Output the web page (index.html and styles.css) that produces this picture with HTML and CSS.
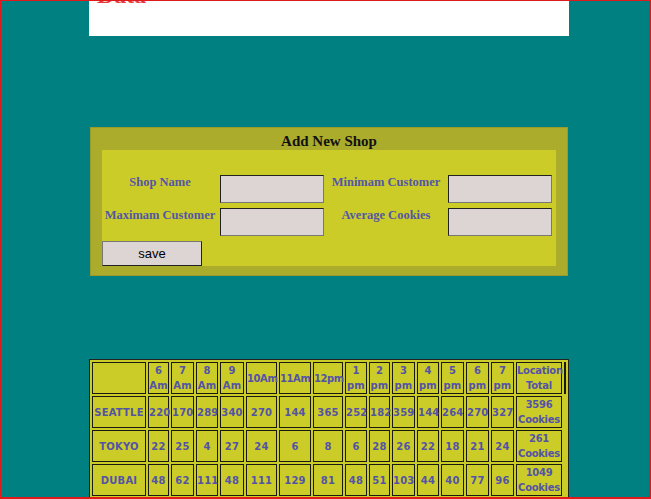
FILE: index.html
```html
<!DOCTYPE html>
<html>
<head>
<meta charset="utf-8">
<link rel="stylesheet" href="styles.css">
</head>
<body>
<div class="frame"></div>
<div class="page">
  <header class="banner">
    <h1 class="banner-title">Data</h1>
  </header>

  <form class="shop-form">
    <h2 class="form-title">Add New Shop</h2>
    <div class="form-body">
      <div class="grid">
        <label class="lbl">Shop Name</label>
        <input class="field" type="text">
        <label class="lbl">Minimam Customer</label>
        <input class="field" type="text">
        <label class="lbl">Maximam Customer</label>
        <input class="field" type="text">
        <label class="lbl">Average Cookies</label>
        <input class="field" type="text">
      </div>
      <button class="save" type="button">save</button>
    </div>
  </form>

  <table class="sales">
    <colgroup>
      <col class="c-name"><col class="c21"><col class="c23"><col class="c22"><col class="c24">
      <col class="c31"><col class="c32"><col class="c30"><col class="c22"><col class="c21">
      <col class="c23"><col class="c22"><col class="c23"><col class="c23"><col class="c23">
      <col class="c-total"><col class="c-extra">
    </colgroup>
    <tr>
      <th></th><th>6 Am</th><th>7 Am</th><th>8 Am</th><th>9 Am</th><th class="tight">10Am</th><th class="tight">11Am</th><th class="tight">12pm</th>
      <th>1 pm</th><th>2 pm</th><th>3 pm</th><th>4 pm</th><th>5 pm</th><th>6 pm</th><th>7 pm</th>
      <th class="total">Location Total</th><th class="extra"></th>
    </tr>
    <tr>
      <td>SEATTLE</td><td>220</td><td>170</td><td>289</td><td>340</td><td>270</td><td>144</td><td>365</td>
      <td>252</td><td>182</td><td>359</td><td>144</td><td>264</td><td>270</td><td>327</td><td class="total">3596 Cookies</td>
    </tr>
    <tr>
      <td>TOKYO</td><td>22</td><td>25</td><td>4</td><td>27</td><td>24</td><td>6</td><td>8</td>
      <td>6</td><td>28</td><td>26</td><td>22</td><td>18</td><td>21</td><td>24</td><td class="total">261 Cookies</td>
    </tr>
    <tr>
      <td>DUBAI</td><td>48</td><td>62</td><td>111</td><td>48</td><td>111</td><td>129</td><td>81</td>
      <td>48</td><td>51</td><td>103</td><td>44</td><td>40</td><td>77</td><td>96</td><td class="total">1049 Cookies</td>
    </tr>
    <tr>
      <td>PARIS</td><td>35</td><td>48</td><td>20</td><td>54</td><td>29</td><td>37</td><td>60</td>
      <td>41</td><td>33</td><td>58</td><td>26</td><td>47</td><td>39</td><td>52</td><td class="total">579 Cookies</td>
    </tr>
  </table>
</div>
</body>
</html>
```

FILE: styles.css
```css
html {
  overflow: hidden;
}
body {
  margin: 0;
  background: #008080;
  font-family: "Liberation Serif", serif;
}
.frame {
  position: fixed;
  inset: 0;
  border-style: solid;
  border-color: #e01a1a;
  border-width: 1px 2px 2px 1px;
  pointer-events: none;
  z-index: 10;
}
.page {
  width: 480px;
  margin-left: 89px;
}
.banner {
  background: #ffffff;
  height: 36px;
  overflow: hidden;
  padding-left: 8px;
}
.banner-title {
  margin: -17px 0 0;
  font-size: 24px;
  line-height: 24px;
  color: #e83a3a;
  font-weight: bold;
}
.shop-form {
  margin: 91px 1px 0 1px;
  background: #abab2c;
  border: 1px solid #9a9a2a;
  padding: 0 11px 9px 11px;
}
.form-title {
  margin: 0;
  padding-top: 4px;
  text-align: center;
  font-size: 15px;
  line-height: 18px;
  font-weight: bold;
  color: #111;
}
.form-body {
  background: #cccc29;
  padding: 25px 0 0 0;
}
.grid {
  display: grid;
  grid-template-columns: 116px 104px 120px 104px;
  column-gap: 2px;
  row-gap: 5px;
  align-items: start;
}
.lbl {
  text-align: center;
  font-weight: bold;
  font-size: 12.5px;
  line-height: 14px;
  color: #5357a3;
}
.field {
  box-sizing: border-box;
  width: 104px;
  height: 28px;
  margin: 0;
  background: #ddd4d4;
  border: 1px solid;
  border-color: #222 #777 #777 #222;
}
.save {
  display: block;
  margin-top: 5px;
  box-sizing: border-box;
  width: 100px;
  height: 25px;
  background: #ddd4d4;
  border: 1px solid;
  border-color: #777 #222 #222 #777;
  font-family: "Liberation Sans", sans-serif;
  font-size: 13px;
  color: #000;
  padding: 0;
}
.sales {
  margin-top: 83px;
  width: 480px;
  table-layout: fixed;
  border-collapse: separate;
  border-spacing: 2px;
  border: 1px solid #222;
  background: #cccc29;
  font-family: "DejaVu Sans", sans-serif;
  font-weight: bold;
  font-size: 10px;
  color: #5353a6;
}
.sales th,
.sales td {
  border: 1px solid #1a1a10;
  padding: 0;
  text-align: center;
  vertical-align: middle;
  height: 30px;
  line-height: 15px;
  font-weight: bold;
  overflow: visible;
  white-space: normal;
  letter-spacing: 0.2px;
}
.sales .total {
  letter-spacing: -0.3px;
}
.sales .tight {
  letter-spacing: -0.4px;
}
.c-name { width: 54px; }
.c21 { width: 21px; }
.c22 { width: 22px; }
.c23 { width: 23px; }
.c24 { width: 24px; }
.c30 { width: 30px; }
.c31 { width: 31px; }
.c32 { width: 32px; }
.c-total { width: 46px; }
.c-extra { width: 2px; }
```
